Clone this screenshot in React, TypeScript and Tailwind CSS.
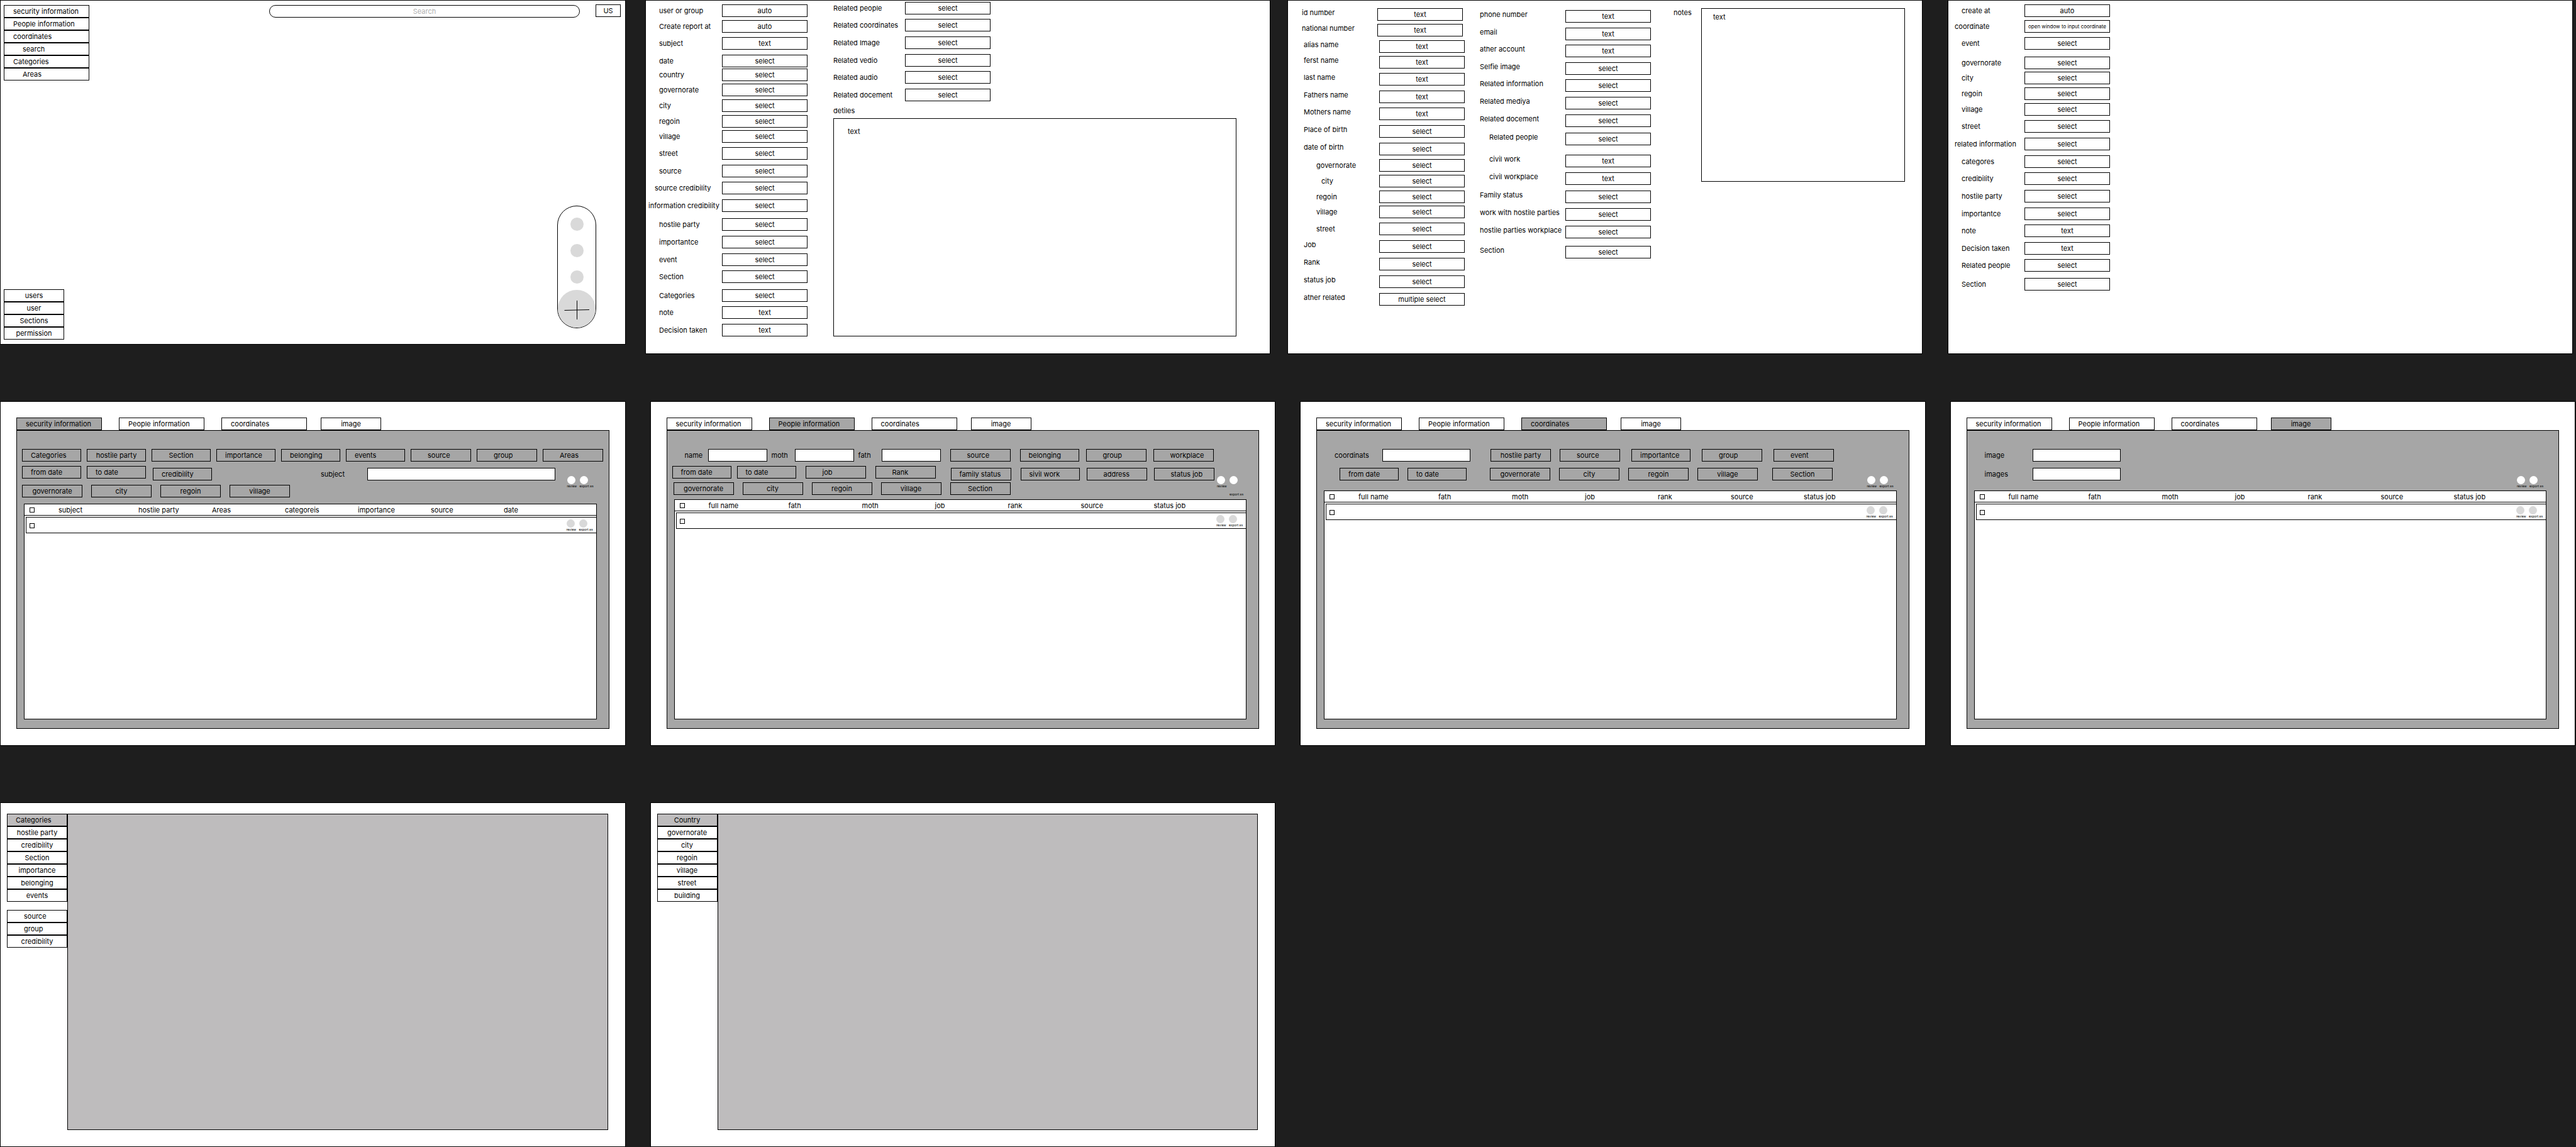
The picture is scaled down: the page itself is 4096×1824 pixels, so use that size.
import { useId, type ReactNode } from "react";
import clsx from "clsx";

type Kind = "auto" | "text" | "select" | "multiple select";

const box = "h-5 border border-black text-[11px] leading-[14px] text-black";

/* ---------- shared pieces ---------- */

function Frame({ className, children }: { className?: string; children: ReactNode }) {
  return (
    <section className={clsx("min-w-0 border border-black bg-white", className)}>{children}</section>
  );
}

function Control({ id, kind, label }: { id: string; kind: Kind; label: string }) {
  const style = clsx(box, "w-[136px] shrink-0 rounded-none bg-white px-1 text-center");
  if (kind === "select" || kind === "multiple select") {
    return (
      <select id={id} className={clsx(style, "appearance-none [text-align-last:center]")} aria-label={label}>
        <option>{kind}</option>
      </select>
    );
  }
  return <input id={id} className={style} defaultValue={kind} readOnly={kind === "auto"} aria-label={label} />;
}

type FieldSpec = {
  label: string;
  kind: Kind | "window";
  gap?: string;
  indent?: string;
  raised?: boolean;
};

function Field({
  label,
  kind,
  gap,
  indent,
  raised,
  labelWidth,
}: FieldSpec & { labelWidth: string }) {
  const id = useId();
  return (
    <div className={clsx("flex", raised ? "items-start" : "items-center", gap)}>
      <label
        htmlFor={id}
        className={clsx("shrink-0 whitespace-nowrap text-[11px] leading-[14px]", labelWidth, indent)}
      >
        {label}
      </label>
      {kind === "window" ? (
        <button
          id={id}
          type="button"
          className="flex h-5 w-[136px] shrink-0 items-center justify-center border border-black text-[8px] leading-[14px] whitespace-nowrap"
        >
          open window to input coordinate
        </button>
      ) : (
        <Control id={id} kind={kind} label={label} />
      )}
    </div>
  );
}

function MenuItem({
  label,
  pad,
  active,
}: {
  label: string;
  pad?: string;
  active?: boolean;
}) {
  return (
    <button
      type="button"
      className={clsx(
        box,
        "flex w-full items-center whitespace-nowrap",
        pad ?? "justify-center",
        active ? "bg-[#bebcbd]" : "bg-white",
      )}
    >
      {label}
    </button>
  );
}

/* ---------- home ---------- */

const mainMenu = [
  { label: "security information", pad: "pl-[14px]" },
  { label: "People information", pad: "pl-[14px]" },
  { label: "coordinates", pad: "pl-[14px]" },
  { label: "search", pad: "pl-[29px]" },
  { label: "Categories", pad: "pl-[14px]" },
  { label: "Areas", pad: "pl-[29px]" },
];

const adminMenu = ["users", "user", "Sections", "permission"];

function Home() {
  return (
    <Frame className="mr-[31px] flex min-h-[548px] flex-col justify-between self-start pt-[7px] pb-[7px] pl-[5px]">
      <div className="flex items-start">
        <nav className="w-[136px]">
          {mainMenu.map((m) => (
            <MenuItem key={m.label} label={m.label} pad={m.pad} />
          ))}
        </nav>
        <input
          type="text"
          placeholder="Search"
          aria-label="Search"
          className="ml-[286px] h-5 min-w-0 flex-1 rounded-[10px] border border-black text-center text-[11px] leading-[14px] placeholder:text-[#b0b0b0]"
        />
        <button
          type="button"
          className={clsx(box, "-mt-px mr-[7px] ml-[25px] flex w-10 items-center justify-center")}
        >
          US
        </button>
      </div>
      <div className="flex items-end justify-between">
        <nav className="w-24">
          {adminMenu.map((label) => (
            <MenuItem key={label} label={label} />
          ))}
        </nav>
        <div className="mr-[46px] mb-[18px] flex w-[62px] flex-col items-center gap-[21px] rounded-full border border-black pt-[18px]">
          <button type="button" aria-label="Action one" className="size-[21px] rounded-full bg-[#d9d9d9]" />
          <button type="button" aria-label="Action two" className="size-[21px] rounded-full bg-[#d9d9d9]" />
          <button type="button" aria-label="Action three" className="size-[21px] rounded-full bg-[#d9d9d9]" />
          <button
            type="button"
            aria-label="Add"
            className="-mt-[11px] flex size-[60px] items-center justify-center rounded-full bg-[#d9d9d9]"
          >
            <svg viewBox="0 0 40 32" className="mt-1 h-8 w-10" fill="none" stroke="#000" strokeWidth="1">
              <path d="M20.5 1v30M0.500 16.500L40 15.500" />
            </svg>
          </button>
        </div>
      </div>
    </Frame>
  );
}

/* ---------- report form ---------- */

const reportFields: FieldSpec[] = [
  { label: "user or group", kind: "auto" },
  { label: "Create report at", kind: "auto", gap: "mt-[5px]" },
  { label: "subject", kind: "text", gap: "mt-[7px]" },
  { label: "date", kind: "select", gap: "mt-2" },
  { label: "country", kind: "select", gap: "mt-0.5" },
  { label: "governorate", kind: "select", gap: "mt-1" },
  { label: "city", kind: "select", gap: "mt-[5px]" },
  { label: "regoin", kind: "select", gap: "mt-[5px]" },
  { label: "village", kind: "select", gap: "mt-1" },
  { label: "street", kind: "select", gap: "mt-[7px]" },
  { label: "source", kind: "select", gap: "mt-2" },
  { label: "source credibility", kind: "select", gap: "mt-[7px]", indent: "pl-[10px]" },
  { label: "information credibility", kind: "select", gap: "mt-2", indent: "pl-0" },
  { label: "hostile party", kind: "select", gap: "mt-[10px]" },
  { label: "importantce", kind: "select", gap: "mt-2" },
  { label: "event", kind: "select", gap: "mt-2" },
  { label: "Section", kind: "select", gap: "mt-[7px]" },
  { label: "Categories", kind: "select", gap: "mt-[10px]" },
  { label: "note", kind: "text", gap: "mt-[7px]" },
  { label: "Decision taken", kind: "text", gap: "mt-2" },
];

const reportRelated: FieldSpec[] = [
  { label: "Related people", kind: "select" },
  { label: "Related coordinates", kind: "select", gap: "mt-[7px]" },
  { label: "Related Image", kind: "select", gap: "mt-2" },
  { label: "Related vedio", kind: "select", gap: "mt-2" },
  { label: "Related audio", kind: "select", gap: "mt-[7px]" },
  { label: "Related docement", kind: "select", gap: "mt-2" },
];

function ReportForm() {
  return (
    <Frame className="mr-[27px] flex pb-[27px]">
      <div className="pt-[6px] pl-1">
        {reportFields.map((f) => (
          <Field key={f.label} labelWidth="w-[117px]" indent="pl-[17px]" {...f} />
        ))}
      </div>
      <div className="mr-[53px] ml-[41px] flex min-w-0 flex-1 flex-col pt-0.5">
        {reportRelated.map((f) => (
          <Field key={f.label} labelWidth="w-[114px]" {...f} />
        ))}
        <label htmlFor="report-details" className="mt-2 text-[11px] leading-[14px]">
          detiles
        </label>
        <textarea
          id="report-details"
          defaultValue="text"
          className="mt-[5px] flex-1 resize-none border border-black px-[22px] py-[13px] text-[11px] leading-[14px]"
        />
      </div>
    </Frame>
  );
}

/* ---------- person form ---------- */

const personIds: FieldSpec[] = [
  { label: "id number", kind: "text", raised: true },
  { label: "national number", kind: "text", gap: "mt-[5px]", raised: true },
];

const personFields: FieldSpec[] = [
  { label: "alias name", kind: "text", gap: "mt-[6px]", raised: true },
  { label: "ferst name", kind: "text", gap: "mt-[5px]", raised: true },
  { label: "last name", kind: "text", gap: "mt-[7px]", raised: true },
  { label: "Fathers name", kind: "text", gap: "mt-2", raised: true },
  { label: "Mothers name", kind: "text", gap: "mt-[7px]", raised: true },
  { label: "Place of birth", kind: "select", gap: "mt-2", raised: true },
  { label: "date of birth", kind: "select", gap: "mt-2", raised: true },
  { label: "governorate", kind: "select", gap: "mt-[6px]", indent: "pl-5" },
  { label: "city", kind: "select", gap: "mt-[5px]", indent: "pl-7" },
  { label: "regoin", kind: "select", gap: "mt-[5px]", indent: "pl-5" },
  { label: "village", kind: "select", gap: "mt-1", indent: "pl-5" },
  { label: "street", kind: "select", gap: "mt-[7px]", indent: "pl-5" },
  { label: "Job", kind: "select", gap: "mt-2", raised: true },
  { label: "Rank", kind: "select", gap: "mt-2", raised: true },
  { label: "status job", kind: "select", gap: "mt-2", raised: true },
  { label: "ather related", kind: "multiple select", gap: "mt-2", raised: true },
];

const personMore: FieldSpec[] = [
  { label: "phone number", kind: "text" },
  { label: "email", kind: "text", gap: "mt-2" },
  { label: "ather account", kind: "text", gap: "mt-[7px]" },
  { label: "Selfie image", kind: "select", gap: "mt-2" },
  { label: "Related information", kind: "select", gap: "mt-[7px]" },
  { label: "Related mediya", kind: "select", gap: "mt-2" },
  { label: "Related docement", kind: "select", gap: "mt-2" },
  { label: "Related people", kind: "select", gap: "mt-[9px]", indent: "pl-[15px]" },
  { label: "civil work", kind: "text", gap: "mt-[15px]", indent: "pl-[15px]" },
  { label: "civil workplace", kind: "text", gap: "mt-2", indent: "pl-[15px]" },
  { label: "Family status", kind: "select", gap: "mt-[9px]" },
  { label: "work with hostile parties", kind: "select", gap: "mt-2" },
  { label: "hostile parties workplace", kind: "select", gap: "mt-2" },
  { label: "Section", kind: "select", gap: "mt-3" },
];

function PersonForm() {
  return (
    <Frame className="mr-10 flex items-start pt-3">
      <div>
        <div className="pl-[22px]">
          {personIds.map((f) => (
            <Field key={f.label} labelWidth="w-[120px]" {...f} />
          ))}
        </div>
        <div className="pl-[25px]">
          {personFields.map((f) => (
            <Field key={f.label} labelWidth="w-[120px]" {...f} />
          ))}
        </div>
      </div>
      <div className="ml-6 pt-[3px]">
        {personMore.map((f) => (
          <Field key={f.label} labelWidth="w-[136px]" raised {...f} />
        ))}
      </div>
      <label htmlFor="person-notes" className="ml-9 w-11 shrink-0 text-[11px] leading-[14px]">
        notes
      </label>
      <textarea
        id="person-notes"
        defaultValue="text"
        className="mr-[27px] h-[276px] min-w-0 flex-1 resize-none border border-black px-[18px] py-[6px] text-[11px] leading-[14px]"
      />
    </Frame>
  );
}

/* ---------- coordinate form ---------- */

const coordinateFields: FieldSpec[] = [
  { label: "create at", kind: "auto" },
  { label: "coordinate", kind: "window", gap: "mt-[5px]", indent: "pl-0" },
  { label: "event", kind: "select", gap: "mt-[7px]" },
  { label: "governorate", kind: "select", gap: "mt-[11px]" },
  { label: "city", kind: "select", gap: "mt-1" },
  { label: "regoin", kind: "select", gap: "mt-[5px]" },
  { label: "village", kind: "select", gap: "mt-[5px]" },
  { label: "street", kind: "select", gap: "mt-[7px]" },
  { label: "related information", kind: "select", gap: "mt-2", indent: "pl-0" },
  { label: "categores", kind: "select", gap: "mt-2" },
  { label: "credibility", kind: "select", gap: "mt-[7px]" },
  { label: "hostile party", kind: "select", gap: "mt-2" },
  { label: "importantce", kind: "select", gap: "mt-2" },
  { label: "note", kind: "text", gap: "mt-[7px]" },
  { label: "Decision taken", kind: "text", gap: "mt-2" },
  { label: "Related people", kind: "select", gap: "mt-[7px]" },
  { label: "Section", kind: "select", gap: "mt-[10px]" },
];

function CoordinateForm() {
  return (
    <Frame className="mr-[5px] pt-[6px] pl-[10px]">
      {coordinateFields.map((f) => (
        <Field key={f.label} labelWidth="w-[111px]" indent="pl-[11px]" {...f} />
      ))}
    </Frame>
  );
}

/* ---------- search screens ---------- */

const tabs = [
  { label: "security information", size: "w-[136px] pl-[14px]" },
  { label: "People information", size: "ml-[27px] w-[136px] pl-[14px]" },
  { label: "coordinates", size: "ml-[27px] w-[136px] pl-[14px]" },
  { label: "image", size: "ml-[22px] w-24 justify-center" },
];

function SearchFrame({ active, children }: { active: string; children: ReactNode }) {
  return (
    <Frame className="flex min-h-[548px] flex-col px-[25px] pt-[25px] pb-[26px]">
      <div role="tablist" className="flex">
        {tabs.map((t) => (
          <button
            key={t.label}
            type="button"
            role="tab"
            aria-selected={t.label === active}
            className={clsx(
              box,
              "flex items-center whitespace-nowrap",
              t.size,
              t.label === active ? "bg-[#a6a6a6]" : "bg-white",
            )}
          >
            {t.label}
          </button>
        ))}
      </div>
      <div className="flex flex-1 flex-col border border-black bg-[#a6a6a6] pt-[29px] pb-[14px]">
        {children}
      </div>
    </Frame>
  );
}

type ChipProps = { label: string; width?: string; align?: string; className?: string };

function Chip({ label, width = "w-24", align = "justify-center", className }: ChipProps) {
  return (
    <button
      type="button"
      className={clsx(box, "flex shrink-0 items-center whitespace-nowrap", width, align, className)}
    >
      {label}
    </button>
  );
}

const near = "pl-[13px]";
const far = "pl-[26px]";
const narrow = "w-[94px]";

function TextFilter({
  label,
  labelWidth,
  width,
  className,
}: {
  label: string;
  labelWidth: string;
  width: string;
  className?: string;
}) {
  const id = useId();
  return (
    <div className={clsx("flex items-center", className)}>
      <label htmlFor={id} className={clsx("text-[11px] leading-[14px]", labelWidth)}>
        {label}
      </label>
      <input id={id} className={clsx(box, "rounded-none bg-white px-1", width)} />
    </div>
  );
}

function RowActions({ light, dropped }: { light?: boolean; dropped?: boolean }) {
  const dot = clsx("size-[13px] rounded-full", light ? "bg-white" : "bg-[#d9d9d9]");
  return (
    <div className="flex w-[47px] shrink-0 items-start">
      <button type="button" className="flex w-5 flex-col items-start text-[5px] leading-[6px]">
        <span className={dot} />
        review
      </button>
      <button
        type="button"
        className={clsx(
          "flex flex-col items-start text-[5px] leading-[6px] whitespace-nowrap",
          dropped && "gap-[13px]",
        )}
      >
        <span className={dot} />
        export as
      </button>
    </div>
  );
}

function FilterArea({ children, dropped }: { children?: ReactNode; dropped?: boolean }) {
  return (
    <div className="mt-[7px] mr-[19px] flex items-start justify-between">
      <div>{children}</div>
      <div className="pt-4">
        <RowActions light dropped={dropped} />
      </div>
    </div>
  );
}

const personColumns = ["full name", "fath", "moth", "job", "rank", "source", "status job"];

function Results({ columns, className }: { columns: string[]; className: string }) {
  return (
    <div className={clsx("mr-[19px] ml-[11px] flex-1 border border-black bg-white", className)}>
      <table className="w-full table-fixed border-separate border-spacing-0">
        <colgroup>
          <col className="w-[54px]" />
          <col className="w-[127px]" />
          <col className="w-[117px]" />
          <col className="w-[116px]" />
          <col className="w-[116px]" />
          <col className="w-[116px]" />
          <col className="w-[116px]" />
          <col />
        </colgroup>
        <thead>
          <tr>
            <th className="h-[18px] border-b border-black p-0">
              <input
                type="checkbox"
                aria-label="Select all"
                className="ml-2 block size-2 appearance-none border border-black"
              />
            </th>
            {columns.map((c) => (
              <th
                key={c}
                className="h-[18px] border-b border-black p-0 text-left text-[11px] leading-[14px] font-normal whitespace-nowrap"
              >
                {c}
              </th>
            ))}
          </tr>
        </thead>
        <tbody>
          <tr>
            <td colSpan={columns.length + 1} className="p-0 pt-0.5 pl-0.5">
              <div className="flex h-[26px] items-start justify-between border-y border-l border-black pt-[3px]">
                <input
                  type="checkbox"
                  aria-label="Select row"
                  className="mt-[6px] ml-[5px] size-2 appearance-none border border-black"
                />
                <RowActions />
              </div>
            </td>
          </tr>
        </tbody>
      </table>
    </div>
  );
}

function SecuritySearch() {
  return (
    <SearchFrame active="security information">
      <div className="ml-2 flex gap-[9px]">
        <Chip label="Categories" width={narrow} align={near} />
        <Chip label="hostile party" width={narrow} />
        <Chip label="Section" width={narrow} />
        <Chip label="importance" width={narrow} align={near} />
        <Chip label="belonging" width={narrow} align={near} />
        <Chip label="events" width={narrow} align={near} />
        <Chip label="source" align={far} />
        <Chip label="group" align={far} />
        <Chip label="Areas" align={far} />
      </div>
      <FilterArea>
        <div className="ml-2 flex h-[23px] items-end">
          <div className="flex gap-[9px] self-start">
            <Chip label="from date" width={narrow} align={near} />
            <Chip label="to date" width={narrow} align={near} />
          </div>
          <Chip label="credibility" width={narrow} align={near} className="ml-[11px]" />
          <TextFilter label="subject" labelWidth="w-[74px]" width="w-[299px]" className="ml-[173px]" />
        </div>
        <div className="mt-[7px] ml-2 flex gap-[14px]">
          <Chip label="governorate" />
          <Chip label="city" />
          <Chip label="regoin" />
          <Chip label="village" />
        </div>
      </FilterArea>
      <Results
        className="mt-[10px]"
        columns={["subject", "hostile party", "Areas", "categoreis", "importance", "source", "date"]}
      />
    </SearchFrame>
  );
}

function PeopleSearch() {
  return (
    <SearchFrame active="People information">
      <div className="ml-7 flex">
        <TextFilter label="name" labelWidth="w-[37px]" width={narrow} />
        <TextFilter label="moth" labelWidth="w-[37px]" width={narrow} className="ml-[7px]" />
        <TextFilter label="fath" labelWidth="w-[37px]" width={narrow} className="ml-[7px]" />
        <Chip label="source" align={far} className="ml-[15px]" />
        <Chip label="belonging" width={narrow} align={near} className="ml-[15px]" />
        <Chip label="group" align={far} className="ml-[11px]" />
        <Chip label="workplace" align={far} className="ml-[11px]" />
      </div>
      <FilterArea dropped>
        <div className="ml-2 flex h-[23px] items-end">
          <div className="flex self-start">
            <Chip label="from date" width={narrow} align={near} />
            <Chip label="to date" width={narrow} align={near} className="ml-[9px]" />
            <Chip label="job" align={far} className="ml-[15px]" />
            <Chip label="Rank" align={far} className="ml-[15px]" />
          </div>
          <Chip label="family status" align={near} className="ml-6" />
          <Chip label="sivil work" width={narrow} align={near} className="ml-[15px]" />
          <Chip label="address" align={far} className="ml-[11px]" />
          <Chip label="status job" align={far} className="ml-[11px]" />
        </div>
        <div className="mt-[3px] ml-[10px] flex gap-[14px]">
          <Chip label="governorate" />
          <Chip label="city" />
          <Chip label="regoin" />
          <Chip label="village" />
          <Chip label="Section" />
        </div>
      </FilterArea>
      <Results className="mt-[5px]" columns={personColumns} />
    </SearchFrame>
  );
}

function CoordinateSearch() {
  return (
    <SearchFrame active="coordinates">
      <div className="ml-7 flex">
        <TextFilter label="coordinats" labelWidth="w-[76px]" width="w-[140px]" />
        <Chip label="hostile party" className="ml-8" />
        <Chip label="source" align={far} className="ml-[14px]" />
        <Chip label="importantce" width={narrow} align={near} className="ml-[18px]" />
        <Chip label="group" align={far} className="ml-[18px]" />
        <Chip label="event" align={far} className="ml-[18px]" />
      </div>
      <FilterArea>
        <div className="ml-9 flex pt-[3px]">
          <Chip label="from date" width={narrow} align={near} />
          <Chip label="to date" width={narrow} align={near} className="ml-[14px]" />
          <Chip label="governorate" className="ml-[37px]" />
          <Chip label="city" className="ml-[14px]" />
          <Chip label="regoin" className="ml-[14px]" />
          <Chip label="village" className="ml-[14px]" />
          <Chip label="Section" className="ml-[23px]" />
        </div>
      </FilterArea>
      <Results className="mt-1" columns={personColumns} />
    </SearchFrame>
  );
}

function ImageSearch() {
  return (
    <SearchFrame active="image">
      <TextFilter label="image" labelWidth="w-[76px]" width="w-[140px]" className="ml-7" />
      <FilterArea>
        <TextFilter label="images" labelWidth="w-[76px]" width="w-[140px]" className="ml-7 pt-[3px]" />
      </FilterArea>
      <Results className="mt-1" columns={personColumns} />
    </SearchFrame>
  );
}

/* ---------- settings screens ---------- */

type MenuSpec = { label: string; pad?: string };

function SettingsFrame({ groups }: { groups: MenuSpec[][] }) {
  return (
    <Frame className="flex pt-[17px] pr-[27px] pb-[26px] pl-[10px]">
      <nav className="flex w-24 shrink-0 flex-col gap-[13px]">
        {groups.map((items, g) => (
          <div key={g}>
            {items.map((m, i) => (
              <MenuItem key={m.label} label={m.label} pad={m.pad} active={g === 0 && i === 0} />
            ))}
          </div>
        ))}
      </nav>
      <main className="flex-1 border border-black bg-[#bebcbd]" />
    </Frame>
  );
}

const categoryGroups: MenuSpec[][] = [
  [
    { label: "Categories", pad: "pl-[13px]" },
    { label: "hostile party" },
    { label: "credibility" },
    { label: "Section" },
    { label: "importance" },
    { label: "belonging" },
    { label: "events" },
  ],
  [{ label: "source", pad: "pl-[26px]" }, { label: "group", pad: "pl-[26px]" }, { label: "credibility" }],
];

const areaGroups: MenuSpec[][] = [
  [
    { label: "Country" },
    { label: "governorate" },
    { label: "city" },
    { label: "regoin" },
    { label: "village" },
    { label: "street" },
    { label: "building" },
  ],
];

export default function App() {
  return (
    <div className="flex min-h-screen flex-col bg-[#1e1e1e] font-['Inter',sans-serif] text-black">
      <div className="grid grid-cols-[1026fr_1021fr_1050fr_999fr]">
        <Home />
        <ReportForm />
        <PersonForm />
        <CoordinateForm />
      </div>
      <div className="mt-[75px] grid grid-cols-4 gap-[39px] pr-px">
        <SecuritySearch />
        <PeopleSearch />
        <CoordinateSearch />
        <ImageSearch />
      </div>
      <div className="mt-[90px] grid flex-1 grid-cols-4 gap-[39px] pr-px">
        <SettingsFrame groups={categoryGroups} />
        <SettingsFrame groups={areaGroups} />
      </div>
    </div>
  );
}
